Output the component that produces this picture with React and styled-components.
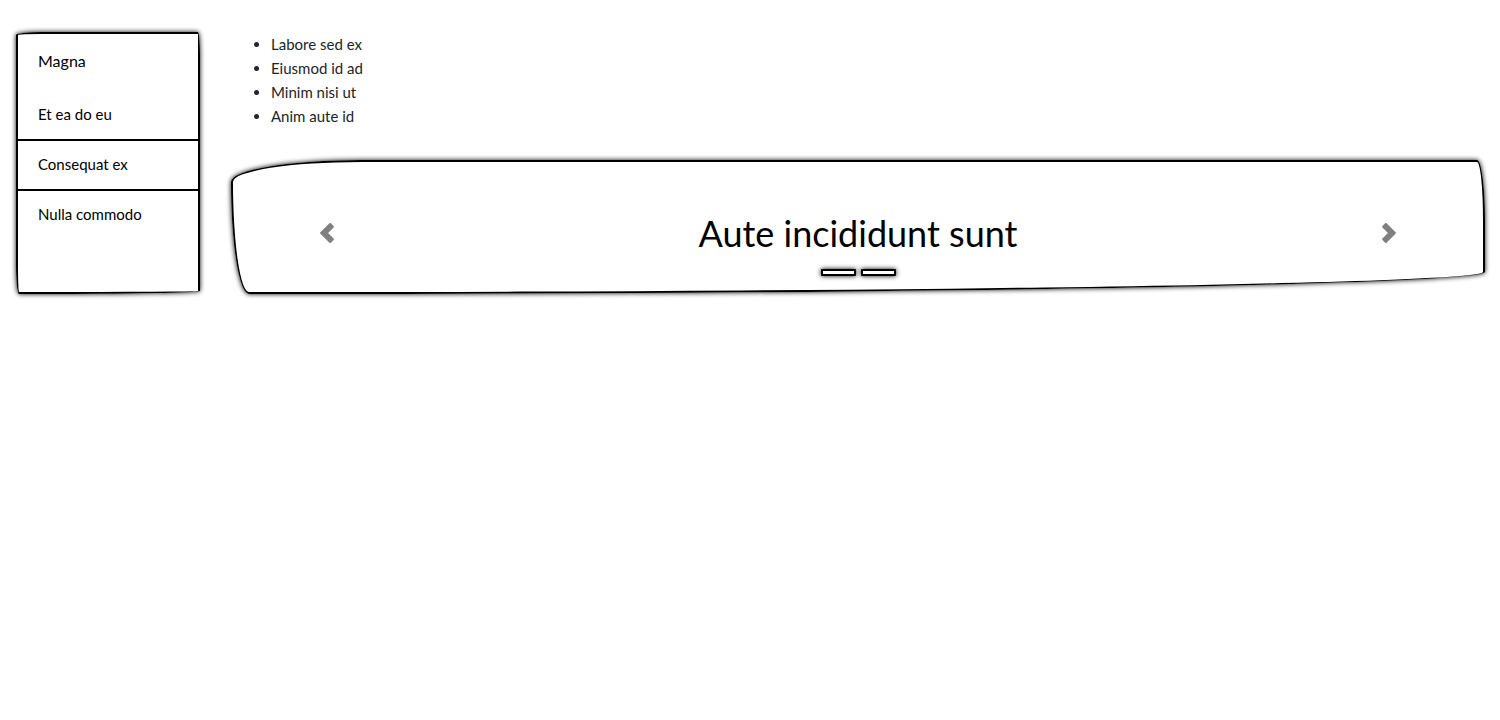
import React from 'react';
import styled, { createGlobalStyle } from 'styled-components';

const Global = createGlobalStyle`
  * { box-sizing: border-box; }
  body { margin: 0; background: #fff; color: #212529; font: 15px/24px Lato, sans-serif; }
  ul { margin: 0; padding: 0; }
`;
const Page = styled.div`
  display: flex;
  align-items: flex-start;
  gap: 31px;
  padding: 32px 15px 32px 16px;
`;
const Sidebar = styled.nav`
  flex: 0 0 184px;
  min-height: 262px;
  border: 2px solid #000;
  border-radius: 25px 2px 160px 3px / 3px 25px 3px 30px;
  box-shadow: 0 0 5px #000;
  color: #000;
`;
const Brand = styled.h1`
  margin: 0;
  padding: 15px 20px 18px;
  font-size: 16px;
  line-height: 24px;
  font-weight: 400;
`;
const Menu = styled.ul`
  list-style: none;
`;
const MenuItem = styled.li`
  & + & { border-top: 2px solid #000; }
`;
const MenuLink = styled.a`
  display: block;
  padding: 11px 20px 13px;
  color: inherit;
  text-decoration: none;
`;
const Main = styled.main`
  flex: 1;
  min-width: 0;
`;
const List = styled.ul`
  && { padding-left: 40px; margin-bottom: 32px; }
`;
const Carousel = styled.section`
  display: flex;
  align-items: center;
  min-height: 134px;
  border: 2px solid #000;
  border-radius: 130px 8px 1200px 18px / 22px 60px 22px 112px;
  box-shadow: 0 0 5px #000;
  color: #000;
`;
const Arrow = styled.button`
  display: flex;
  justify-content: center;
  align-self: stretch;
  align-items: center;
  flex: 0 0 15%;
  padding: 12px 0 0;
  border: 0;
  background: none;
  color: #808080;
`;
const ArrowIcon = styled.svg`
  width: 20px;
  height: 20px;
  fill: currentColor;
  stroke: currentColor;
  stroke-width: 0.8;
  stroke-linejoin: round;
`;
const Slide = styled.div`
  flex: 1;
  padding: 32px 0 8px;
  text-align: center;
`;
const Title = styled.h2`
  margin: 0 0 6px;
  font-size: 36px;
  line-height: 60px;
  font-weight: 400;
`;
const Dots = styled.div`
  display: flex;
  justify-content: center;
  gap: 5px;
`;
const Dot = styled.button`
  width: 35px;
  height: 7px;
  padding: 0;
  border: 2px solid #000;
  border-radius: 1px;
  background: #fff;
  box-shadow: 0 0 5px #000;
`;

export default function App() {
  return (
    <Page>
      <Global />
      <Sidebar aria-label="Main">
        <Brand>Magna</Brand>
        <Menu>
          {['Et ea do eu', 'Consequat ex', 'Nulla commodo'].map((t) => (
            <MenuItem key={t}><MenuLink href="#">{t}</MenuLink></MenuItem>
          ))}
        </Menu>
      </Sidebar>
      <Main>
        <List>
          {['Labore sed ex', 'Eiusmod id ad', 'Minim nisi ut', 'Anim aute id'].map((t) => <li key={t}>{t}</li>)}
        </List>
        <Carousel>
          <Arrow aria-label="Previous">
            <ArrowIcon viewBox="0 0 8 8"><path d="M5.25 .4L1.65 4l3.6 3.6 1.1-1.1L3.85 4l2.5-2.5z" /></ArrowIcon>
          </Arrow>
          <Slide>
            <Title>Aute incididunt sunt</Title>
            <Dots><Dot aria-label="Slide 1" /><Dot aria-label="Slide 2" /></Dots>
          </Slide>
          <Arrow aria-label="Next">
            <ArrowIcon viewBox="0 0 8 8"><path d="M2.75 .4L6.35 4l-3.6 3.6-1.1-1.1L4.15 4l-2.5-2.5z" /></ArrowIcon>
          </Arrow>
        </Carousel>
      </Main>
    </Page>
  );
}
